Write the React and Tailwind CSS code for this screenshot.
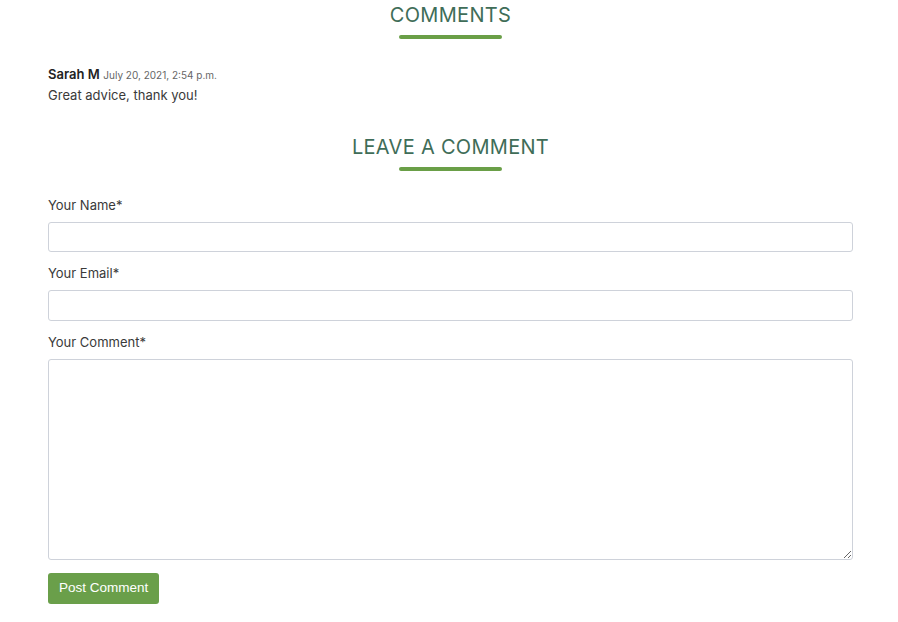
import React from 'react';

const font = { fontFamily: 'Inter, "Noto Sans", sans-serif' };

/* section title with the short green rule beneath it */
const SectionTitle = ({ children }) => (
  <div className="flex flex-col items-center">
    <h2 className="text-[20px] leading-[28px] tracking-[0.3px] text-[#3f6d58] uppercase font-normal">
      {children}
    </h2>
    <div className="mt-[6px] w-[103px] h-[4px] rounded-full bg-[#6a9f47]" />
  </div>
);

const Field = ({ label, className = 'mb-[11px]', children }) => (
  <div className={className}>
    <label className="block text-[13px] leading-[20px] text-[#3a3a3a] mb-[7px]">{label}</label>
    {children}
  </div>
);

export default function App() {
  return (
    <div className="min-h-[622px] bg-white text-[#212529]" style={font}>
      <div className="mx-[48px] w-[805px] pt-[1px]">
        <SectionTitle>Comments</SectionTitle>

        <div className="mt-[25px]">
          <div className="text-[13px] leading-[20px]">
            <span className="font-semibold text-[#222]">Sarah M</span>{' '}
            <span className="text-[10px] text-[#666]">July 20, 2021, 2:54 p.m.</span>
          </div>
          <p className="text-[13px] leading-[20px] text-[#3a3a3a]">Great advice, thank you!</p>
        </div>

        <div className="mt-[28px]">
          <SectionTitle>Leave a Comment</SectionTitle>
        </div>

        <form className="mt-[24px]" onSubmit={(e) => e.preventDefault()}>
          <Field label="Your Name*">
            <input type="text" className="block w-full h-[30px] border border-[#ced2da] rounded-[3px] px-2 text-[13px] outline-none" />
          </Field>
          <Field label="Your Email*">
            <input type="email" className="block w-full h-[31px] border border-[#ced2da] rounded-[3px] px-2 text-[13px] outline-none" />
          </Field>
          <Field label="Your Comment*" className="mb-[13px]">
            <textarea className="block w-full h-[201px] border border-[#ced2da] rounded-[3px] px-2 py-1 text-[13px] outline-none" />
          </Field>
          <button
            type="submit"
            className="h-[31px] px-[11px] rounded-[3px] bg-[#6a9f4a] text-white text-[13.5px]"
            style={{ fontFamily: '"Liberation Sans", Arial, sans-serif' }}
          >
            Post Comment
          </button>
        </form>
      </div>
    </div>
  );
}
